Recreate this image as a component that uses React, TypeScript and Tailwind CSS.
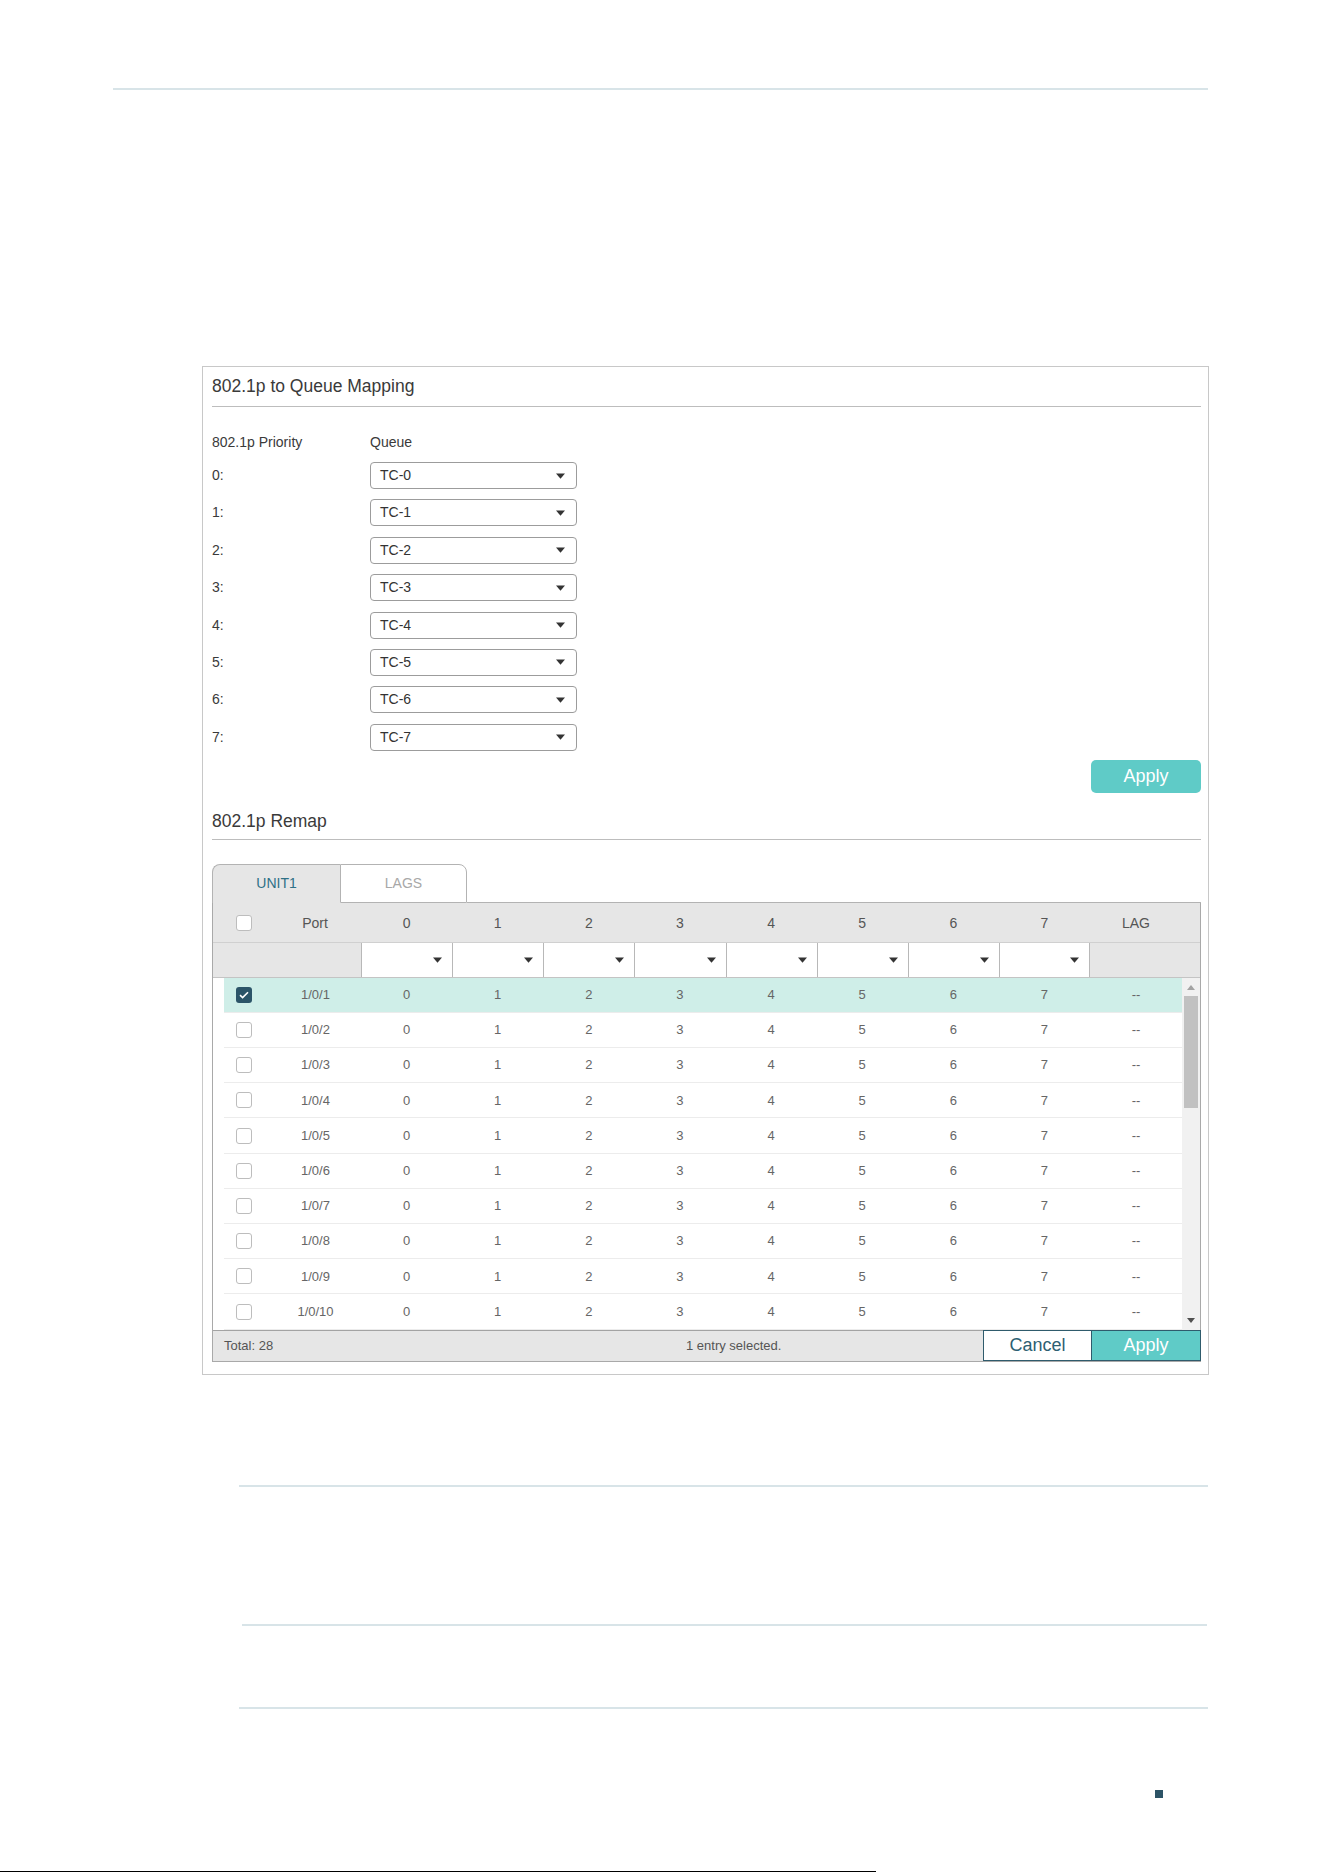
import React from 'react';

const PRIORITIES = [0, 1, 2, 3, 4, 5, 6, 7];
const PORTS = Array.from({ length: 10 }, (_, i) => `1/0/${i + 1}`);

function Caret({ className = '' }: { className?: string }) {
  return (
    <svg width="9" height="6" viewBox="0 0 9 6" className={className}>
      <path d="M0 0.5h9L4.5 5.8z" fill="#333" />
    </svg>
  );
}

function Checkbox({ checked }: { checked?: boolean }) {
  if (checked) {
    return (
      <div className="flex h-[16px] w-[16px] items-center justify-center rounded-[3px] bg-[#2b5468]">
        <svg width="10" height="8" viewBox="0 0 10 8">
          <path d="M1 4.2l2.6 2.4L9 1.2" fill="none" stroke="#fff" strokeWidth="1.6" />
        </svg>
      </div>
    );
  }
  return <div className="h-[16px] w-[16px] rounded-[3px] border border-[#bdbdbd] bg-white" />;
}

function QueueSelect({ value }: { value: string }) {
  return (
    <div className="flex h-[27px] w-[207px] items-center justify-between rounded-[4px] border border-[#9c9c9c] bg-white pl-[9px] pr-[11px] text-[14px] text-[#333]">
      <span>{value}</span>
      <Caret />
    </div>
  );
}

export default function App() {
  return (
    <div
      className="relative h-[1872px] w-[1324px] overflow-hidden bg-white"
      style={{ fontFamily: '"Liberation Sans", Arial, sans-serif' }}
    >
      <div className="h-[88px]" />
      <div className="ml-[113px] h-[2px] w-[1095px] bg-[#d8e4e8]" />

      {/* settings panel */}
      <div className="ml-[202px] mt-[276px] h-[1009px] w-[1007px] border border-[#c8c8c8] pl-[9px] pr-[7px]">
        <div className="mt-[5px] h-[28px] text-[17.5px] leading-[28px] text-[#3a3a3a]">802.1p to Queue Mapping</div>
        <div className="mt-[6px] h-px bg-[#bdbdbd]" />

        <div className="mt-[25px] flex h-[20px] items-center text-[14px] text-[#3a3a3a]">
          <span className="w-[158px]">802.1p Priority</span>
          <span>Queue</span>
        </div>
        <div className="mt-[10px] flex flex-col gap-[10.4px]">
          {PRIORITIES.map((p) => (
            <div key={p} className="flex h-[27px] items-center text-[14px] text-[#3a3a3a]">
              <span className="w-[158px]">{p}:</span>
              <QueueSelect value={`TC-${p}`} />
            </div>
          ))}
        </div>

        <div className="mt-[9px] flex justify-end">
          <div className="flex h-[33px] w-[110px] items-center justify-center rounded-[5px] bg-[#5fcbc7] text-[18px] text-white">
            Apply
          </div>
        </div>

        <div className="mt-[14px] h-[28px] text-[17.5px] leading-[28px] text-[#3a3a3a]">802.1p Remap</div>
        <div className="mt-[4px] h-px bg-[#bdbdbd]" />

        {/* tabs */}
        <div className="mt-[24px] flex h-[39px] text-[14px]">
          <div className="flex w-[128px] items-center justify-center rounded-tl-[8px] border-l border-t border-[#b3b3b3] bg-[#e6e6e6] text-[#2e7086]">
            UNIT1
          </div>
          <div className="flex w-[127px] items-center justify-center rounded-tr-[8px] border border-[#b3b3b3] bg-white text-[#a8a8a8]">
            LAGS
          </div>
          <div className="flex-1 border-b border-[#b3b3b3]" />
        </div>

        {/* port table */}
        <div className="border-x border-b border-[#a9a9a9] text-[#555]">
          <div className="flex h-[40px] items-center border-b border-[#d0d0d0] bg-[#e6e6e6] pt-[2px] text-[14px]">
            <div className="w-[56px] pl-[23px]">
              <Checkbox />
            </div>
            <div className="w-[92px] text-center">Port</div>
            {PRIORITIES.map((p) => (
              <div key={p} className="w-[91.125px] text-center">
                {p}
              </div>
            ))}
            <div className="w-[92px] text-center">LAG</div>
          </div>

          <div className="flex h-[35px] border-b border-[#c4c4c4] bg-[#e6e6e6]">
            <div className="w-[148px]" />
            {PRIORITIES.map((p) => (
              <div
                key={p}
                className="flex w-[91.125px] items-center justify-end border-l border-[#b8b8b8] bg-white pr-[10px] last:border-r"
              >
                <Caret />
              </div>
            ))}
          </div>

          <div className="flex h-[352px]">
            <div className="w-[11px]" />
            <div className="flex w-[958px] flex-col">
              {PORTS.map((port, i) => (
                <div
                  key={port}
                  className={`flex h-[35.2px] items-center border-b border-[#ececec] text-[13px] text-[#666] ${
                    i === 0 ? 'bg-[#cfeee8]' : 'bg-white'
                  }`}
                >
                  <div className="w-[45px] pl-[12px]">
                    <Checkbox checked={i === 0} />
                  </div>
                  <div className="w-[92px] pl-[1px] text-center">{port}</div>
                  {PRIORITIES.map((p) => (
                    <div key={p} className="w-[91.125px] text-center">
                      {p}
                    </div>
                  ))}
                  <div className="w-[92px] text-center">--</div>
                </div>
              ))}
            </div>
            {/* scrollbar */}
            <div className="flex w-[18px] flex-col items-center bg-[#f1f1f1]">
              <svg width="8" height="5" viewBox="0 0 8 5" className="mt-[7px]">
                <path d="M0 5h8L4 0z" fill="#a3a3a3" />
              </svg>
              <div className="mt-[6px] h-[112px] w-[14px] bg-[#c1c1c1]" />
              <div className="flex-1" />
              <svg width="8" height="5" viewBox="0 0 8 5" className="mb-[7px]">
                <path d="M0 0h8L4 5z" fill="#505050" />
              </svg>
            </div>
          </div>

          <div className="flex h-[31px] items-center border-t border-[#a3a3a3] bg-[#e6e6e6] text-[13px] text-[#555]">
            <div className="w-[473px] pl-[11px]">Total: 28</div>
            <div>1 entry selected.</div>
            <div className="flex-1" />
            <div className="flex h-[31px] w-[109px] items-center justify-center border border-[#2f5b6c] bg-white text-[18px] text-[#2d5f73]">
              Cancel
            </div>
            <div className="-mr-px flex h-[31px] w-[109px] items-center justify-center border border-l-0 border-[#2f5b6c] bg-[#5fcbc7] text-[18px] text-white">
              Apply
            </div>
          </div>
        </div>
      </div>

      <div className="ml-[239px] mt-[110px] h-[2px] w-[969px] bg-[#d8e4e8]" />
      <div className="ml-[242px] mt-[137px] h-[2px] w-[965px] bg-[#d8e4e8]" />
      <div className="ml-[239px] mt-[81px] h-[2px] w-[969px] bg-[#d8e4e8]" />
      <div className="ml-[1155px] mt-[81px] h-[8px] w-[8px] bg-[#2d5466]" />
      <div className="mt-[73px] h-px w-[876px] bg-black" />
    </div>
  );
}
